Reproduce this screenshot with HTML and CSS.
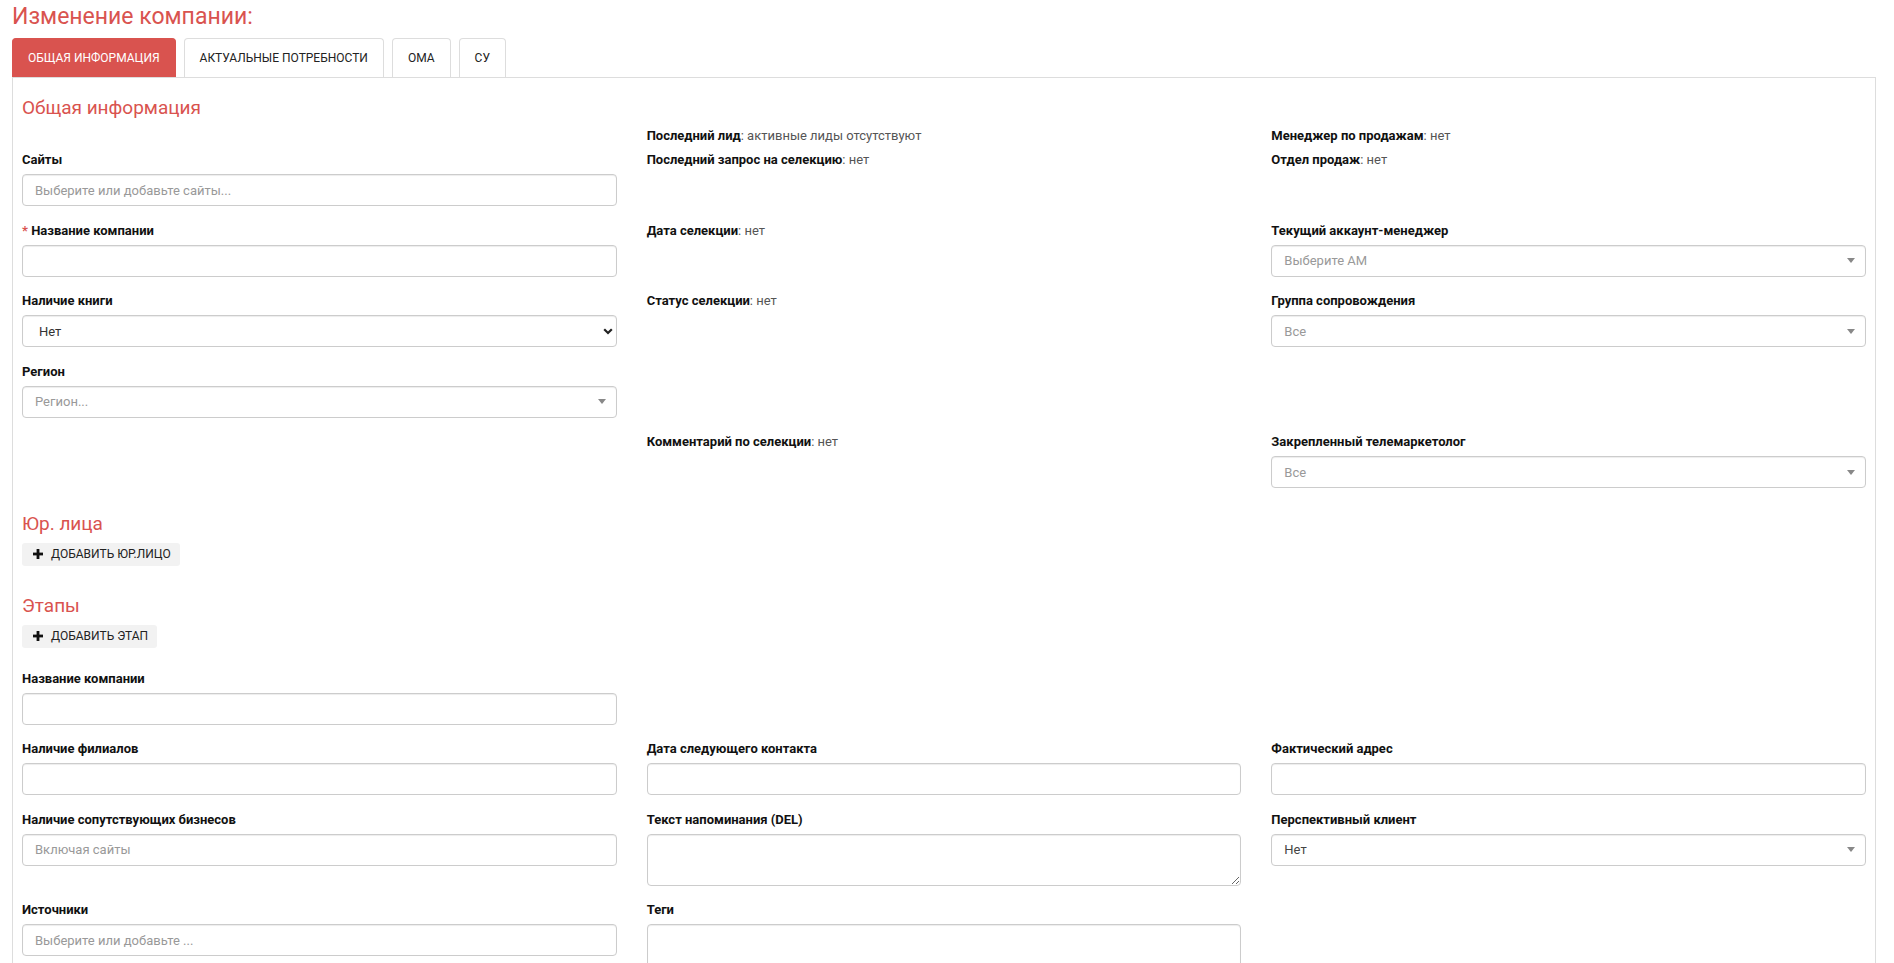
FILE: index.html
```html
<!DOCTYPE html>
<html lang="ru">
<head>
    <meta charset="utf-8">
    <title>Изменение компании</title>
    <link rel="stylesheet" href="styles.css">
</head>
<body>
<div class="page">
    <h3 class="page-title">Изменение компании:</h3>

    <!-- Вкладки -->
    <div class="tabs">
        <a class="tab active" href="#">Общая информация</a>
        <a class="tab" href="#">Актуальные потребности</a>
        <a class="tab" href="#">ОМА</a>
        <a class="tab" href="#">СУ</a>
    </div>

    <div class="tab-panel">
        <h4 class="section-title">Общая информация</h4>

        <div class="form-grid">
            <!-- ряд 1 -->
            <div class="field shifted">
                <label>Сайты</label>
                <input type="text" class="control" placeholder="Выберите или добавьте сайты...">
            </div>
            <div class="info">
                <div class="info-line"><b>Последний лид</b>: активные лиды отсутствуют</div>
                <div class="info-line"><b>Последний запрос на селекцию</b>: нет</div>
            </div>
            <div class="info">
                <div class="info-line"><b>Менеджер по продажам</b>: нет</div>
                <div class="info-line"><b>Отдел продаж</b>: нет</div>
            </div>

            <!-- ряд 2 -->
            <div class="field">
                <label><span class="req">*</span> Название компании</label>
                <input type="text" class="control">
            </div>
            <div class="info">
                <div class="info-line"><b>Дата селекции</b>: нет</div>
            </div>
            <div class="field">
                <label>Текущий аккаунт-менеджер</label>
                <div class="control select-box"><span class="placeholder">Выберите АМ</span><span class="caret"></span></div>
            </div>

            <!-- ряд 3 -->
            <div class="field">
                <label>Наличие книги</label>
                <div class="native-select">
                    <select class="control">
                        <option>Нет</option>
                        <option>Да</option>
                    </select>
                    <svg class="chevron" width="10" height="7" viewBox="0 0 10 7"><path d="M1.2 1.2 5 5 8.8 1.2" fill="none" stroke="#222" stroke-width="2.2"/></svg>
                </div>
            </div>
            <div class="info">
                <div class="info-line"><b>Статус селекции</b>: нет</div>
            </div>
            <div class="field">
                <label>Группа сопровождения</label>
                <div class="control select-box"><span class="placeholder">Все</span><span class="caret"></span></div>
            </div>

            <!-- ряд 4 -->
            <div class="field">
                <label>Регион</label>
                <div class="control select-box"><span class="placeholder">Регион...</span><span class="caret"></span></div>
            </div>
            <div></div>
            <div></div>

            <!-- ряд 5 -->
            <div></div>
            <div class="info">
                <div class="info-line"><b>Комментарий по селекции</b>: нет</div>
            </div>
            <div class="field">
                <label>Закрепленный телемаркетолог</label>
                <div class="control select-box"><span class="placeholder">Все</span><span class="caret"></span></div>
            </div>
        </div>

        <h4 class="section-title">Юр. лица</h4>
        <button class="btn-add spaced" type="button">
            <svg width="10" height="10" viewBox="0 0 10 10"><rect x="3.6" y="0" width="2.8" height="10" fill="#111"/><rect x="0" y="3.6" width="10" height="2.8" fill="#111"/></svg>
            Добавить юр.лицо
        </button>

        <h4 class="section-title">Этапы</h4>
        <button class="btn-add" type="button">
            <svg width="10" height="10" viewBox="0 0 10 10"><rect x="3.6" y="0" width="2.8" height="10" fill="#111"/><rect x="0" y="3.6" width="10" height="2.8" fill="#111"/></svg>
            Добавить этап
        </button>

        <div class="form-grid">
            <div class="field">
                <label>Название компании</label>
                <input type="text" class="control">
            </div>
            <div></div>
            <div></div>

            <div class="field">
                <label>Наличие филиалов</label>
                <input type="text" class="control">
            </div>
            <div class="field">
                <label>Дата следующего контакта</label>
                <input type="text" class="control">
            </div>
            <div class="field">
                <label>Фактический адрес</label>
                <input type="text" class="control">
            </div>

            <div class="field">
                <label>Наличие сопутствующих бизнесов</label>
                <input type="text" class="control" placeholder="Включая сайты">
            </div>
            <div class="field">
                <label>Текст напоминания (DEL)</label>
                <textarea class="control"></textarea>
            </div>
            <div class="field">
                <label>Перспективный клиент</label>
                <div class="control select-box"><span class="value">Нет</span><span class="caret"></span></div>
            </div>

            <div class="field">
                <label>Источники</label>
                <input type="text" class="control" placeholder="Выберите или добавьте ...">
            </div>
            <div class="field">
                <label>Теги</label>
                <div class="control tags-box"></div>
            </div>
            <div></div>
        </div>
    </div>
</div>
</body>
</html>
```

FILE: styles.css
```css
/* Общие стили */
* {
    box-sizing: border-box;
}

html, body {
    overflow: hidden;
}

body {
    margin: 0;
    font-family: Roboto, "Liberation Sans", Arial, sans-serif;
    font-size: 13px;
    color: #333;
    background: #fff;
}

.page {
    padding: 0 18px 0 12px;
}

.page-title {
    margin: 3px 0 7px;
    font-size: 23px;
    line-height: 28px;
    font-weight: 400;
    color: #d9534f;
}

/* Вкладки */
.tabs {
    display: flex;
    gap: 8px;
}

.tab {
    display: block;
    padding: 10px 15px;
    line-height: 18px;
    font-size: 12px;
    text-transform: uppercase;
    text-decoration: none;
    color: #222;
    background: #fff;
    border: 1px solid #ddd;
    border-bottom: none;
    border-radius: 4px 4px 0 0;
}

.tab.active {
    background: #d9534f;
    border-color: #d9534f;
    color: #fff;
}

.tab-panel {
    border: 1px solid #ddd;
    padding: 10px 9px;
    min-height: 1000px;
}

.section-title {
    margin: 9px 0 8px;
    font-size: 19px;
    line-height: 22px;
    font-weight: 400;
    color: #d9534f;
}

/* Сетка формы */
.form-grid {
    display: grid;
    grid-template-columns: repeat(3, 1fr);
    column-gap: 30px;
}

.field {
    margin-bottom: 15.5px;
}

.field.shifted {
    padding-top: 24px;
}

.field label {
    display: block;
    margin-bottom: 5px;
    line-height: 18px;
    font-weight: 700;
    color: #111;
}

.req {
    color: #d9534f;
}

.control {
    display: block;
    width: 100%;
    height: 32px;
    padding: 0 12px;
    border: 1px solid #ccc;
    border-radius: 4px;
    box-shadow: inset 0 1px 1px rgba(0, 0, 0, .075);
    background: #fff;
    font: inherit;
    color: #444;
}

.control::placeholder {
    color: #999;
}

textarea.control {
    height: 52px;
    padding: 6px 12px;
}

.tags-box {
    height: 60px;
}

/* Выпадающие списки */
.select-box {
    display: flex;
    align-items: center;
    justify-content: space-between;
    padding: 0 10px 0 12px;
}

.select-box .placeholder {
    color: #999;
}

.select-box .value {
    color: #444;
}

.caret {
    border-style: solid;
    border-width: 5px 4px 0;
    border-color: #888 transparent transparent;
}

.native-select {
    position: relative;
}

.native-select select {
    appearance: none;
    padding-left: 16px;
    color: #333;
}

.native-select .chevron {
    position: absolute;
    right: 4px;
    top: 13px;
}

/* Информационные строки */
.info-line {
    line-height: 18px;
    margin-bottom: 6px;
    color: #555;
}

.info-line b {
    color: #111;
}

/* Кнопки */
.btn-add {
    display: flex;
    align-items: center;
    gap: 8px;
    width: fit-content;
    height: 23px;
    margin-bottom: 22px;
    padding: 0 9px 0 11px;
    border: none;
    border-radius: 3px;
    background: #f2f2f2;
    font: inherit;
    font-size: 12px;
    text-transform: uppercase;
    color: #222;
}

.btn-add.spaced {
    margin-bottom: 29px;
}
```
